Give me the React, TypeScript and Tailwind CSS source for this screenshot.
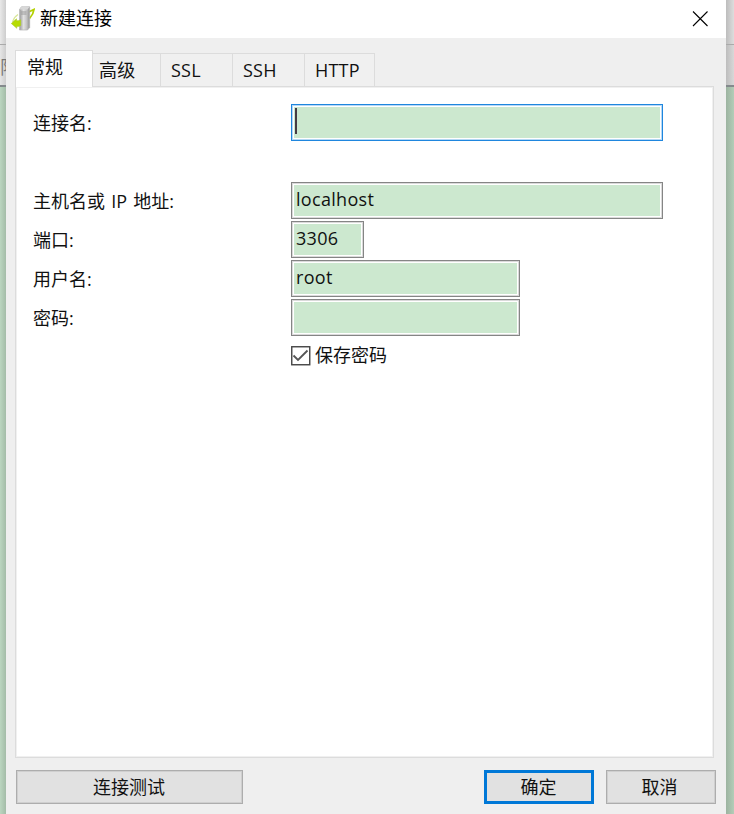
import { useState } from "react";

const tabs = [
  { label: "高级", width: "w-[68px]", pad: "pl-[6px]" },
  { label: "SSL", width: "w-[72px]", pad: "pl-[10px]" },
  { label: "SSH", width: "w-[72px]", pad: "pl-[10px]" },
  { label: "HTTP", width: "w-[70px]", pad: "pl-[10px]" },
];

const fields = [
  { label: "主机名或 IP 地址:", value: "localhost", width: "w-[372px]" },
  { label: "端口:", value: "3306", width: "w-[73px]" },
  { label: "用户名:", value: "root", width: "w-[229px]" },
  { label: "密码:", value: "", width: "w-[229px]" },
];

function ServerIcon() {
  return (
    <svg width="24" height="26" viewBox="0 0 24 26" className="shrink-0">
      <defs>
        <linearGradient id="tower" x1="0" x2="1">
          <stop offset="0" stopColor="#999" />
          <stop offset="0.4" stopColor="#e2e2e2" />
          <stop offset="0.7" stopColor="#c4c4c4" />
          <stop offset="1" stopColor="#909090" />
        </linearGradient>
      </defs>
      <path d="M17.5 6 L23 3.5 Q22.5 8 18.5 12.5" fill="none" stroke="#b3d000" strokeWidth="1.8" />
      <path d="M7 8.5 Q3 11 1.5 16" fill="none" stroke="#d9e69a" strokeWidth="1.3" />
      <path d="M8.5 3.5 L10.5 0.8 H18.7 V21.5 L16.5 24 H8.5 Z" fill="url(#tower)" stroke="#b5b5b5" strokeWidth="0.7" />
      <path d="M8.5 3.5 L10.5 0.8 H18.7 L16.5 3.5 Z" fill="#d8d8d8" />
      <path d="M10 6 H15.5 M10 8 H15.5" stroke="#9a9a9a" strokeWidth="1" />
      <path d="M0.3 17.5 L5.5 12.8 V14.8 Q8 15 9.7 13.8 V19.5 Q8 20.8 5.8 20.3 V22.3 Z" fill="#b6dc00" stroke="#a9c92c" strokeWidth="0.6" />
    </svg>
  );
}

// part of the main window that shows on both sides of the dialog
function Backdrop({ side }: { side: "left" | "right" }) {
  const left = side === "left";
  return (
    <div className={`flex shrink-0 flex-col overflow-hidden ${left ? "w-[6px]" : "w-[8px]"}`}>
      <div className={`h-[45px] border-b border-[#aaaaaa] ${left ? "bg-linear-to-r from-[#e9e9e9] to-[#cdcdcd]" : "bg-linear-to-l from-[#dddddd] to-[#bdbdbd]"}`} />
      <div className={`flex h-[42px] items-center border-b-2 border-[#858a8d] text-[18px] leading-none text-[#777] ${left ? "bg-linear-to-r from-[#e6e6e6] to-[#cdcdcd]" : "bg-linear-to-l from-[#d8d8d8] to-[#bdbdbd]"}`}>
        {left && <span className="mt-[3px] shrink-0">限</span>}
      </div>
      <div className={`flex-1 ${left ? "bg-linear-to-r from-[#bbd6c0] to-[#a4bca8]" : "bg-linear-to-l from-[#b4cdb8] to-[#9cb3a0]"}`} />
    </div>
  );
}

export default function App() {
  const [saved, setSaved] = useState(true);

  return (
    <div className="flex h-[814px] w-[734px] overflow-hidden bg-white font-['Open_Sans','Noto_Sans_CJK_SC',sans-serif] text-[18px] leading-[24px] text-[#111]">
      <Backdrop side="left" />

      <div className="flex w-[720px] flex-col bg-[#efefef]">
        {/* Title bar */}
        <header className="flex h-[38px] items-center bg-white pl-[5px] pr-[17px]">
          <ServerIcon />
          <h1 className="mb-[2px] ml-[5px] text-black">新建连接</h1>
          <button className="mb-[2px] ml-auto" aria-label="关闭">
            <svg width="17" height="17" viewBox="0 0 17 17" className="block">
              <path d="M1 1.5 L15.5 16 M15.5 1.5 L1 16" stroke="#000" strokeWidth="1.1" />
            </svg>
          </button>
        </header>

        {/* Tabs */}
        <nav className="z-10 ml-[9px] mt-[12px] flex h-[37px] items-end">
          <button className="h-[37px] w-[78px] border border-b-0 border-[#dcdcdc] bg-white pb-[4px] pl-[11px] text-left">
            常规
          </button>
          {tabs.map((tab) => (
            <button
              key={tab.label}
              className={`h-[34px] border-y border-r border-[#dcdcdc] bg-[#f0f0f0] text-left tracking-[0.2px] ${tab.width} ${tab.pad}`}
            >
              {tab.label}
            </button>
          ))}
        </nav>

        <main className="-mt-px ml-[9px] h-[672px] w-[699px] border border-[#dcdcdc] bg-white pl-[17px] pt-[17px] shadow-[inset_0_0_0_1px_#f0f0f0]">
          <div className="flex h-[37px] items-center">
            <label className="w-[258px]">连接名:</label>
            <div className="h-[37px] w-[372px] border border-[#1f86de] bg-white p-[2px] shadow-[inset_0_0_0_1px_#b5d8f5]">
              <div className="h-full bg-[#cce8cf] pl-px pt-px">
                <div className="h-[26px] w-[1.5px] bg-[#443b45]" />
              </div>
            </div>
          </div>

          <div className="mt-[41px] flex flex-col gap-[2px]">
            {fields.map((field) => (
              <div key={field.label} className="flex h-[37px] items-center">
                <label className="w-[258px] [word-spacing:1.5px]">{field.label}</label>
                <div className={`h-[37px] border border-[#858585] bg-white p-[2px] shadow-[inset_0_0_0_1px_#dadada] ${field.width}`}>
                  <div className="h-full bg-[#cce8cf] pl-[2px] pt-[2px] tracking-[0.3px]">{field.value}</div>
                </div>
              </div>
            ))}
          </div>

          <button
            className="ml-[258px] mt-[7px] flex items-center"
            role="checkbox"
            aria-checked={saved}
            onClick={() => setSaved(!saved)}
          >
            <svg width="20" height="20" viewBox="0 0 20 20" className="mt-px">
              <rect x="0.75" y="0.75" width="18" height="18" fill="#fff" stroke="#444" strokeWidth="1.4" />
              {saved && <path d="M2.5 9.5 L7 14 L16.5 4.5" fill="none" stroke="#555" strokeWidth="1.8" />}
            </svg>
            <span className="ml-[4px]">保存密码</span>
          </button>
        </main>

        {/* Buttons */}
        <footer className="mt-[12px] flex pl-[10px]">
          <button className="h-[34px] w-[227px] border border-[#adadad] bg-[#e1e1e1] pr-px shadow-[inset_0_0_0_1px_#cfcfcf]">连接测试</button>
          <button className="ml-[241px] h-[34px] w-[110px] border-[3px] border-[#0078d7] bg-[#e1e1e1] pr-px">确定</button>
          <button className="ml-[12px] h-[34px] w-[110px] border border-[#adadad] bg-[#e1e1e1] pr-[3px] shadow-[inset_0_0_0_1px_#cfcfcf]">取消</button>
        </footer>
      </div>

      <Backdrop side="right" />
    </div>
  );
}
